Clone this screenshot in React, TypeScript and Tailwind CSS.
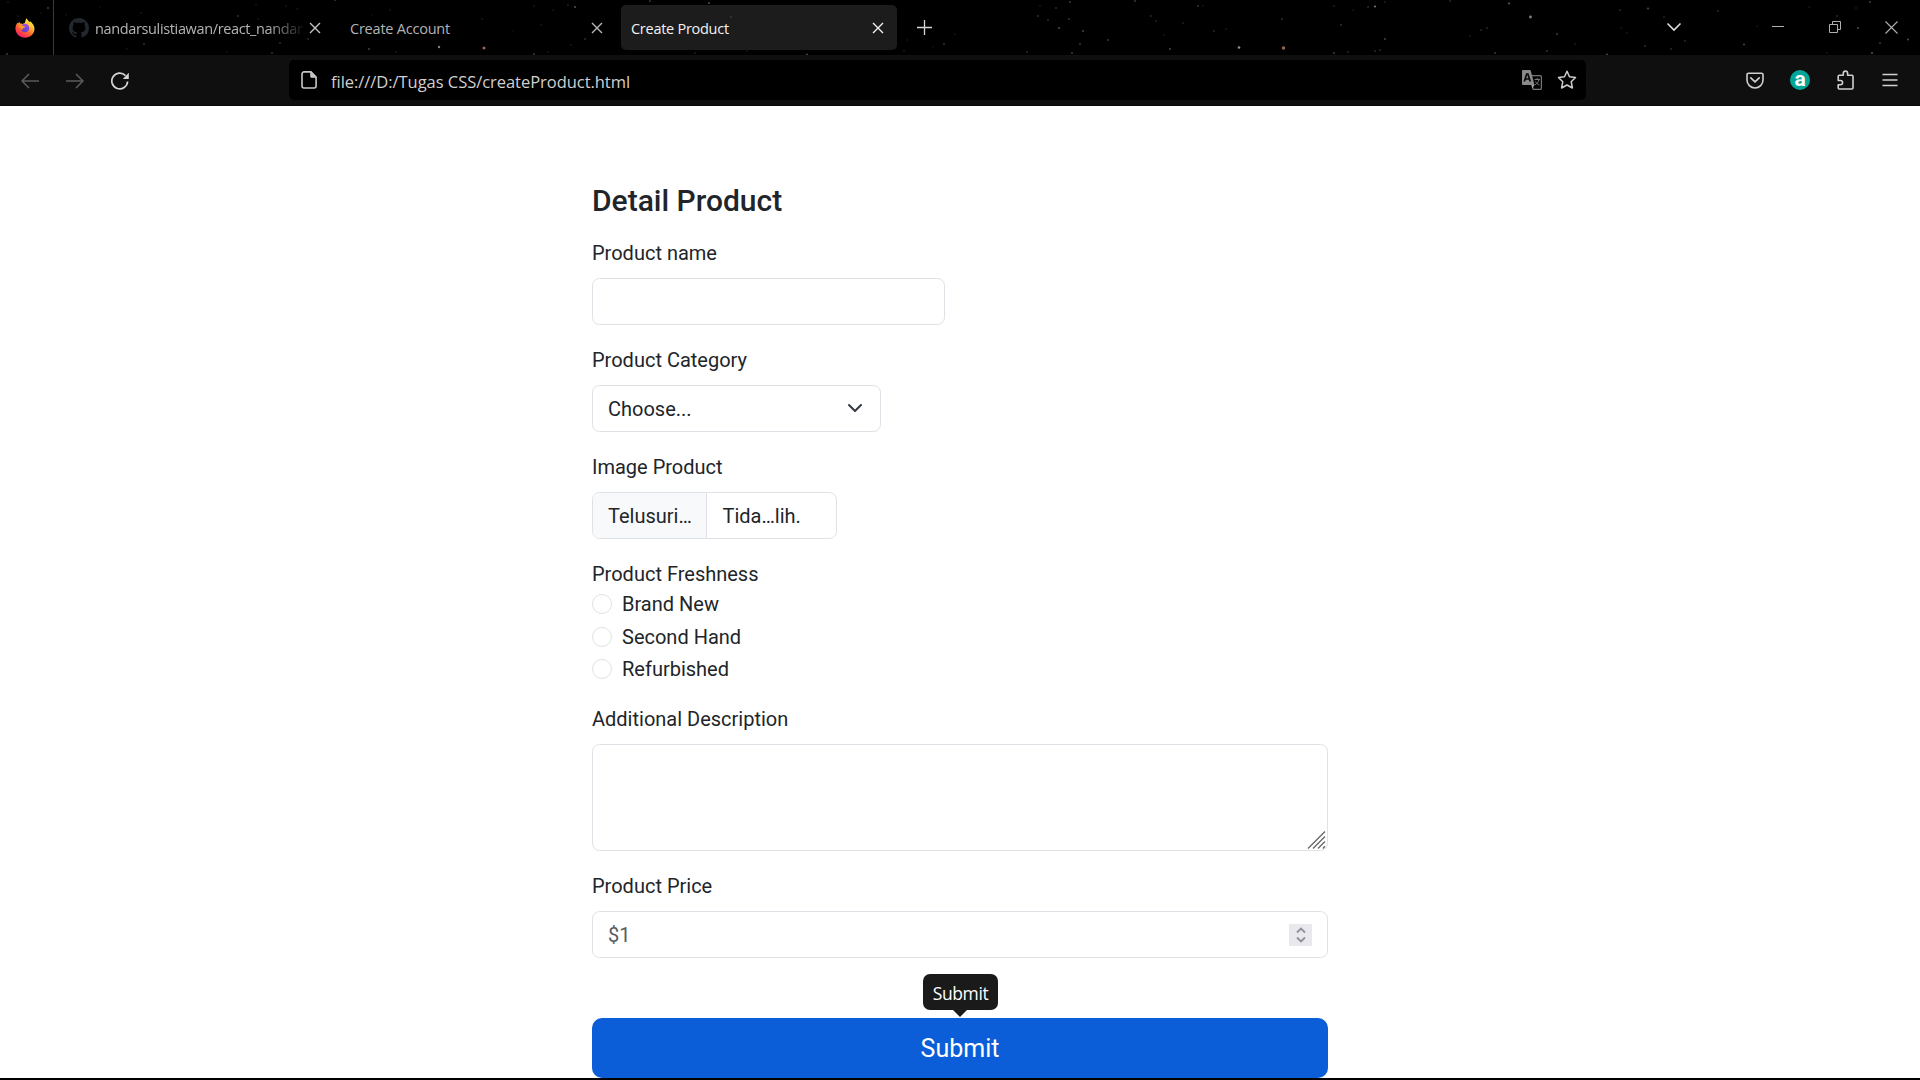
import type { ReactNode } from "react";

const ui = "font-['Open_Sans','Noto_Sans',sans-serif]";

// x, y, radius, opacity of the stars in the browser theme
const stars: [number, number, number, number][] = [
  [8, 2, 0.7, 0.3], [48, 8, 1, 0.45], [18, 16, 0.8, 0.25], [41, 13, 0.7, 0.2], [66, 15, 0.8, 0.2],
  [100, 7, 0.7, 0.2], [141, 13, 0.8, 0.25], [238, 16, 1, 0.35], [256, 5, 0.7, 0.25], [258, 19, 0.8, 0.25],
  [286, 6, 0.8, 0.25], [297, 9, 0.8, 0.25], [335, 0, 1, 0.4], [372, 15, 0.7, 0.2], [390, 10, 0.8, 0.25],
  [308, 39, 1, 0.3], [280, 43, 1, 0.3], [272, 53, 1, 0.35], [227, 52, 0.8, 0.25], [144, 44, 1, 0.35],
  [127, 49, 0.8, 0.25], [192, 39, 0.7, 0.2], [369, 49, 1, 0.45], [439, 47, 1.2, 0.9], [396, 52, 0.8, 0.3],
  [534, 6, 0.8, 0.3], [553, 10, 0.7, 0.3], [568, 5, 0.8, 0.35], [575, 7, 1, 0.6], [482, 19, 0.8, 0.3],
  [541, 25, 0.8, 0.25], [513, 31, 0.7, 0.2], [585, 39, 1, 0.3], [571, 45, 0.8, 0.25], [534, 54, 1, 0.4],
  [548, 52, 0.7, 0.25], [650, 1, 1, 0.4], [709, 3, 1, 0.55], [695, 53, 0.8, 0.35], [747, 51, 0.8, 0.25],
  [731, 17, 1, 0.25], [848, 9, 0.8, 0.12], [907, 40, 0.8, 0.25], [944, 44, 0.9, 0.4], [955, 34, 0.8, 0.25],
  [904, 51, 0.8, 0.3], [933, 47, 0.7, 0.2], [1040, 6, 0.8, 0.25], [1056, 8, 0.9, 0.35], [1070, 2, 1, 0.4],
  [1038, 16, 1, 0.35], [1048, 20, 0.9, 0.3], [1069, 19, 0.9, 0.4], [1059, 28, 1.1, 0.5], [1083, 31, 1, 0.5],
  [1080, 44, 1, 0.4], [1108, 40, 1, 0.4], [1072, 53, 1.1, 0.4], [1027, 52, 0.9, 0.3], [1135, 1, 1, 0.4],
  [1151, 16, 0.9, 0.3], [1156, 21, 0.9, 0.25], [1183, 23, 0.9, 0.25], [1198, 6, 1, 0.35], [1203, 6, 0.8, 0.25],
  [1170, 49, 1, 0.5], [1164, 35, 0.8, 0.25], [1214, 31, 0.9, 0.3], [1226, 29, 0.8, 0.3], [1239, 47.5, 1.3, 1],
  [1282, 19, 0.9, 0.35], [1334, 6, 0.9, 0.25], [1341, 25, 0.9, 0.35], [1368, 7, 0.9, 0.35], [1375, 6.5, 1.1, 0.8],
  [1385, 2, 0.8, 0.35], [1353, 10, 0.8, 0.25], [1385, 39, 1.1, 0.45], [1375, 51, 0.9, 0.3], [1380, 50, 0.9, 0.3],
  [1334, 53, 1.1, 0.4], [1348, 52, 0.9, 0.3], [1509, 3.5, 1.1, 0.6], [1530.5, 17, 1.4, 0.9], [1450, 1, 0.9, 0.3],
  [1557, 34, 1.1, 0.4], [1487, 28, 0.9, 0.3], [1481, 30, 0.9, 0.3], [1470, 36, 0.8, 0.25], [1547, 51, 1, 0.35],
  [1495, 53, 1, 0.4], [1575, 44, 0.8, 0.3], [1648, 8.5, 1.1, 0.5], [1620, 10, 0.9, 0.3], [1664, 17, 0.8, 0.35],
  [1621, 28, 0.8, 0.25], [1627, 33, 0.8, 0.25], [1685, 41, 0.9, 0.3], [1645, 46, 0.9, 0.35], [1671, 49, 0.9, 0.3],
  [1744, 44.5, 1, 0.5], [1718, 11, 0.9, 0.3], [1757, 26, 0.8, 0.25], [1809, 7, 0.8, 0.25], [1837, 16, 0.9, 0.3],
  [1856, 8, 0.8, 0.3], [1870, 2, 1, 0.45], [1858, 28, 1.1, 0.5], [1880, 43, 1, 0.4], [1908, 39.5, 1.1, 0.5],
  [1872, 53, 1.1, 0.55], [1827, 53, 0.8, 0.25],
];
const redStars: [number, number, number, number][] = [
  [484, 48, 1.5, 0.85], [1283.5, 48, 1.7, 0.85], [807, 54.5, 0.9, 0.6], [1607, 54.5, 0.9, 0.6], [7, 54, 0.9, 0.5],
];

function Stars() {
  return (
    <svg className="absolute inset-0 pointer-events-none" width="1920" height="55">
      {stars.map(([x, y, r, o], i) => (
        <circle key={i} cx={x} cy={y} r={r} fill="#c8ccd2" opacity={o * 0.7} />
      ))}
      {redStars.map(([x, y, r, o], i) => (
        <circle key={i} cx={x} cy={y} r={r} fill="#b5765f" opacity={o} />
      ))}
    </svg>
  );
}

function Icon({ w, h, className, children }: { w: number; h: number; className?: string; children: ReactNode }) {
  return (
    <svg width={w} height={h} viewBox={`0 0 ${w} ${h}`} fill="none" stroke="currentColor" className={`shrink-0 ${className ?? ""}`}>
      {children}
    </svg>
  );
}

function CloseIcon({ className }: { className: string }) {
  return (
    <Icon w={12} h={12} className={className}>
      <path d="M1 1l10 10M11 1L1 11" strokeWidth="1.4" />
    </Icon>
  );
}

function FirefoxLogo() {
  return (
    <svg width="20" height="20" viewBox="0 0 20 20" className="ml-[15px] shrink-0">
      <defs>
        <linearGradient id="flame" x1="0.85" y1="0.05" x2="0.25" y2="1">
          <stop offset="0" stopColor="#fff44f" />
          <stop offset="0.3" stopColor="#ffc530" />
          <stop offset="0.6" stopColor="#ff6b2c" />
          <stop offset="0.85" stopColor="#ff3050" />
          <stop offset="1" stopColor="#f0158a" />
        </linearGradient>
        <linearGradient id="globe" x1="0.6" y1="0" x2="0.3" y2="1">
          <stop offset="0" stopColor="#a04cf0" />
          <stop offset="1" stopColor="#5a3fd0" />
        </linearGradient>
      </defs>
      <path d="M11.600.3c.6 1.600 2 2.700 3.100 4 .2-.6.2-1 .1-1.400 2.400 1.800 4.900 4.600 4.700 8.200-.2 5-4.400 8.600-9.300 8.600C4.700 19.700.5 15.600.4 10.500c0-2.300.9-4.200 1.700-5.300l.5-.9.3 1.300C3.300 4.900 4 4.300 4.800 3.900L5 5.500c1 0 2 .1 2.700.4C9 5.600 9.500 5.300 10 4.300 10.500 3 10.600 1.500 11.600.3z" fill="url(#flame)" />
      <circle cx="10" cy="10" r="4.300" fill="url(#globe)" />
      <path d="M3.500 8.200c1.500-1.200 3-1.300 4.500-.4.8.4 1.800.3 2.400.6-.3.900-1.400 1-2.200 1.600-.6.500-.9 1.100-.6 2-1.600-.8-2.600-2.700-4.100-3.800z" fill="#ff9a26" />
    </svg>
  );
}

function TabStrip() {
  return (
    <div className="relative flex h-[55px] items-center bg-black">
      <Stars />
      <FirefoxLogo />
      <div className="ml-[18px] h-full w-px shrink-0 bg-[#3a3a3a]" />
      <svg width="20" height="20" viewBox="0 0 16 16" className="ml-[15px] shrink-0" fill="#22282e">
        <path d="M8 0C3.580 0 0 3.580 0 8c0 3.540 2.290 6.530 5.470 7.590.4.070.550-.170.550-.380 0-.190-.010-.820-.010-1.490-2.010.370-2.530-.490-2.690-.940-.090-.230-.480-.940-.820-1.130-.280-.150-.680-.520-.010-.530.630-.010 1.080.580 1.230.820.720 1.210 1.870.870 2.330.660.070-.520.280-.870.510-1.070-1.780-.2-3.640-.890-3.640-3.950 0-.870.310-1.590.820-2.150-.080-.2-.360-1.020.080-2.120 0 0 .670-.210 2.200.820.640-.180 1.320-.270 2-.270s1.360.090 2 .270c1.530-1.040 2.200-.820 2.200-.820.440 1.100.160 1.920.080 2.120.510.560.820 1.270.820 2.150 0 3.070-1.870 3.750-3.650 3.950.290.250.540.730.540 1.480 0 1.070-.010 1.930-.010 2.200 0 .210.150.460.550.380A8.010 8.010 0 0 0 16 8c0-4.420-3.580-8-8-8z" />
      </svg>
      <div className="mt-[2px] ml-[6px] w-[209px] shrink-0 whitespace-nowrap text-[14.5px] leading-5 tracking-[-0.36px] text-[#b4b4b4] [mask-image:linear-gradient(to_right,black_172px,transparent_212px)]">
        nandarsulistiawan/react_nandar
      </div>
      <CloseIcon className="ml-[4.5px] text-[#c4c4c4]" />
      <div className="mt-[2px] ml-[29.5px] w-[211px] shrink-0 whitespace-nowrap text-[14.5px] leading-5 tracking-[-0.22px] text-[#b4b4b4]">Create Account</div>
      <CloseIcon className="ml-[29.5px] text-[#b8b8b8]" />
      <div className="ml-[18.5px] flex h-[45px] w-[276px] shrink-0 items-center rounded-[5px] bg-[#1c1c1c]">
        <span className="mt-[2px] ml-[10px] w-[211px] whitespace-nowrap text-[14.5px] leading-5 tracking-[-0.27px] text-[#f2f2f2]">Create Product</span>
        <CloseIcon className="ml-[29.5px] text-[#f0f0f0]" />
      </div>
      <Icon w={15} h={15} className="ml-[20px] text-[#d6d6d6]">
        <path d="M7.500 0v15M0 7.500h15" strokeWidth="1.300" />
      </Icon>
      <div className="ml-auto flex items-center pr-[22px]">
        <Icon w={16} h={12} className="-mt-px text-[#dddddd]">
          <path d="M1.500 2.500L8 9l6.500-6.500" strokeWidth="1.600" />
        </Icon>
        <Icon w={12} h={12} className="-mt-px ml-[90px] text-[#b0b0b0]">
          <path d="M0 5.500h12" />
        </Icon>
        <Icon w={12} h={12} className="-mt-px ml-[45px] text-[#b0b0b0]">
          <path d="M.5 3.500h8v8h-8zM3.500 3.500v-3h8v8h-3" />
        </Icon>
        <Icon w={13} h={13} className="-mt-px ml-[44px] text-[#b0b0b0]">
          <path d="M.5.5l12 12M12.500.5l-12 12" strokeWidth="1.100" />
        </Icon>
      </div>
    </div>
  );
}

function Toolbar() {
  return (
    <div className="flex h-[51px] items-center border-b border-[#080808] bg-[#0f0f0f]">
      <Icon w={18} h={16} className="mt-px ml-[21px] text-[#5c5c5c]">
        <path d="M18 8H1.500M8 1L1 8l7 7" strokeWidth="1.500" />
      </Icon>
      <Icon w={18} h={16} className="mt-px ml-[27px] text-[#5c5c5c]">
        <path d="M0 8h16.500M10 1l7 7-7 7" strokeWidth="1.500" />
      </Icon>
      <Icon w={18} h={18} className="mt-[2px] ml-[27px] text-[#d4d4d4]">
        <path d="M16.600 9.500A7.900 7.900 0 1 1 14.500 3.600" strokeWidth="1.700" />
        <path d="M17.800.8v5.600a.6.6 0 0 1-.6.6h-5.400z" fill="currentColor" stroke="none" />
      </Icon>
      <div className="ml-[160px] flex h-10 w-[1297px] shrink-0 items-center rounded-[5px] bg-black">
        <Icon w={16} h={18} className="ml-[12px] text-[#c8c8c8]">
          <path d="M3 .9h7L15.100 6v9a2 2 0 0 1-2 2H3a2 2 0 0 1-2-2V2.900a2 2 0 0 1 2-2z" strokeWidth="1.600" />
          <path d="M9.500 1v4.500a1 1 0 0 0 1 1H15z" fill="currentColor" strokeWidth=".6" />
        </Icon>
        <span className="ml-[14px] mt-[3px] whitespace-nowrap text-[16.500px] leading-6 tracking-[-0.04px] text-[#d0d0d0]">file:///D:/Tugas CSS/createProduct.html</span>
        <svg width="20" height="20" viewBox="0 0 20 20" className="ml-auto shrink-0">
          <path d="M9.500 5.600h8.700a1.200 1.200 0 0 1 1.200 1.200v11.400a1.200 1.200 0 0 1-1.200 1.200h-6.900L9.800 15" fill="none" stroke="#777" strokeWidth="1.200" />
          <path d="M12.500 9.500h5.500M15.200 8v1.500M17 9.500c-.5 2.500-2 4.300-4 5.300M13.500 11.500c.9 1.600 2 2.700 4 3.400" fill="none" stroke="#777" strokeWidth="1" />
          <path d="M1 0h6.800a1 1 0 0 1 .95.7L12.500 15H1a1 1 0 0 1-1-1V1a1 1 0 0 1 1-1z" fill="#8a8a8a" />
          <path d="M12.500 15l-2.300 3.600L9.800 15z" fill="#aaa" />
          <path d="M2.300 11.500L4.700 4h1.200l2.400 7.500M3.200 9h4.200" fill="none" stroke="#0a0a0a" strokeWidth="1.700" />
        </svg>
        <Icon w={20} h={20} className="ml-[15px] mr-[9px] text-[#cccccc]">
          <path d="M10 1.300l2.500 5.400 6 .8-4.300 4.200 1.200 6.300-5.400-3-5.400 3 1.200-6.300L1.500 7.500l6-.8z" strokeWidth="1.500" strokeLinejoin="round" />
        </Icon>
      </div>
      <Icon w={18} h={17} className="ml-[160px] text-[#d0d0d0]">
        <path d="M2.500 1.200h13a1.500 1.500 0 0 1 1.500 1.500V8A8 8 0 0 1 1 8V2.700a1.500 1.500 0 0 1 1.500-1.500z" strokeWidth="1.600" />
        <path d="M4.800 5.800L9 9.800l4.200-4" strokeWidth="1.700" strokeLinecap="round" strokeLinejoin="round" />
      </Icon>
      <div className="ml-[26px] flex size-5 shrink-0 items-center justify-center rounded-full bg-[#00a597]">
        <span className="-mt-[3px] font-['Roboto',sans-serif] text-[21px] leading-5 font-bold text-white">a</span>
      </div>
      <Icon w={18} h={20} className="ml-[27px] text-[#d0d0d0]">
        <path d="M1.200 8.200V6.400a1.200 1.200 0 0 1 1.200-1.200h3.900V3.300a2 2 0 0 1 4.300 0v1.900h4.200A1.200 1.200 0 0 1 16 6.400v11.400a1.200 1.200 0 0 1-1.200 1.200H2.400a1.200 1.200 0 0 1-1.200-1.200v-3.100h2.300a1.900 1.900 0 0 0 0-4.200H1.200z" strokeWidth="1.600" strokeLinejoin="round" />
      </Icon>
      <Icon w={16} h={14} className="ml-[27px] text-[#d0d0d0]">
        <path d="M.5 1.500h15M.5 7h15M.5 12.500h15" strokeWidth="1.500" />
      </Icon>
    </div>
  );
}

function Label({ children }: { children: ReactNode }) {
  return <div className="h-[30px] leading-[30px]">{children}</div>;
}

function Radio({ children }: { children: ReactNode }) {
  return (
    <label className="mb-[2.5px] flex h-[30px] items-center">
      <span className="mr-[10px] size-5 rounded-full border border-[#dee2e6]" />
      {children}
    </label>
  );
}

const box = "rounded-[7.5px] border border-[#dee2e6] bg-white";

function ProductForm() {
  return (
    <main className="mx-auto flex h-[972px] w-[736px] flex-col pt-[77px] font-['Roboto',sans-serif] text-[20px] leading-[30px] text-[#212529]">
      <h1 className="mb-[19px] text-[30px] leading-[36px] font-medium">Detail Product</h1>
      <Label>Product name</Label>
      <div className={`mt-[10px] mb-5 h-[47px] w-[353px] ${box}`} />
      <Label>Product Category</Label>
      <div className={`mt-[10px] mb-5 flex h-[47px] w-[289px] items-center justify-between pr-[17px] pl-[15px] ${box}`}>
        <span>Choose...</span>
        <svg width="16" height="16" viewBox="0 0 16 16" fill="none" className="-mt-px">
          <path d="M2 5l6 6 6-6" stroke="#343a40" strokeWidth="2" strokeLinecap="round" strokeLinejoin="round" />
        </svg>
      </div>
      <Label>Image Product</Label>
      <div className={`mt-[10px] mb-5 flex h-[47px] w-[245px] items-center overflow-hidden ${box}`}>
        <span className="flex h-full w-[114px] items-center border-r border-[#dee2e6] bg-[#f8f9fa] pl-[15px]">Telusuri…</span>
        <span className="pl-[15.5px]">Tida…lih.</span>
      </div>
      <Label>Product Freshness</Label>
      <div className="mb-[17.5px]">
        <Radio>Brand New</Radio>
        <Radio>Second Hand</Radio>
        <Radio>Refurbished</Radio>
      </div>
      <Label>Additional Description</Label>
      <div className={`mt-[10px] mb-5 flex h-[107px] items-end justify-end ${box}`}>
        <svg width="20" height="20" viewBox="0 0 20 20" fill="none" stroke="#6a6a6a" strokeWidth="1.400">
          <path d="M1 18.500L18 1.500M6 18.500L18 6.500M11 18.500l7-7M15.800 18.500l2.200-2.200" />
        </svg>
      </div>
      <Label>Product Price</Label>
      <div className={`mt-[10px] flex h-[47px] shrink-0 items-center justify-between px-[15px] text-[#595c5f] ${box}`}>
        <span>$1</span>
        <span className="flex h-[22px] w-[23px] items-center justify-center bg-[#e9e9ed]">
          <svg width="10" height="16" viewBox="0 0 10 16" fill="none" stroke="#8f8f9d" strokeWidth="1.800">
            <path d="M1 5.500l4-4 4 4M1 10.500l4 4 4-4" />
          </svg>
        </span>
      </div>
      <div className="relative mt-[60px] flex h-[60px] shrink-0 items-center justify-center rounded-[10px] bg-[#0b5ed7] pt-[2px] text-[25px] text-white">
        Submit
        <div className={`absolute -top-[44px] left-[331px] flex h-9 w-[75px] items-center justify-center rounded-[7px] bg-[#1a1a1a] pt-[2px] text-[17.500px] ${ui}`}>
          <span className="tracking-[-0.4px]">Submit</span>
          <svg width="14" height="7" viewBox="0 0 14 7" className="absolute top-full left-[30px]">
            <path d="M0 0h14L7 7z" fill="#1a1a1a" />
          </svg>
        </div>
      </div>
    </main>
  );
}

export default function App() {
  return (
    <div className="flex h-[1080px] w-[1920px] flex-col overflow-hidden bg-white">
      <header className={`shrink-0 ${ui}`}>
        <TabStrip />
        <Toolbar />
      </header>
      <ProductForm />
      <div className="h-[2px] shrink-0 bg-black" />
    </div>
  );
}
